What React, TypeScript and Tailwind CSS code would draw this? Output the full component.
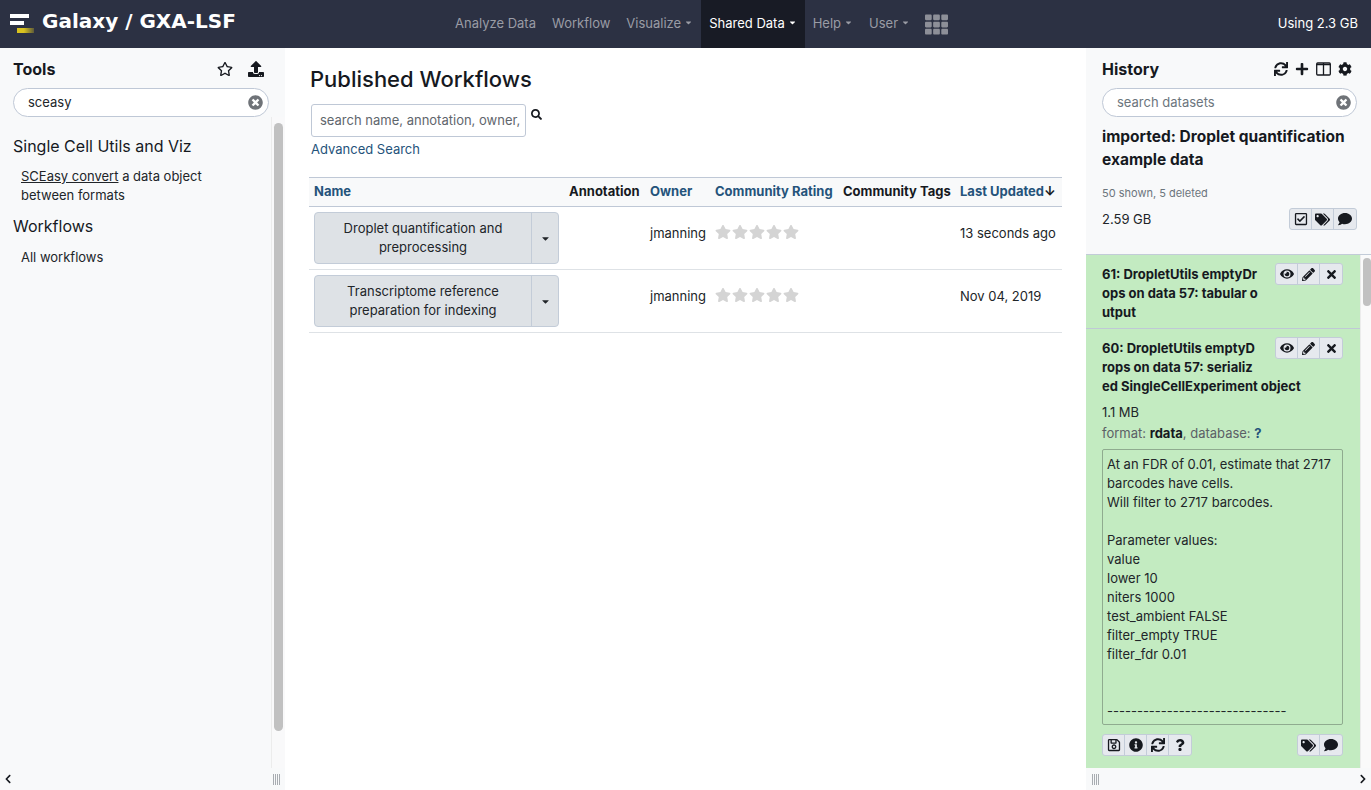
import React from 'react';
import {
  FaRegStar, FaUpload, FaTimesCircle, FaSync, FaPlus, FaCog, FaRegCheckSquare, FaTags, FaComment,
  FaEye, FaPencilAlt, FaTimes, FaRegSave, FaInfoCircle, FaQuestion, FaChevronLeft, FaChevronRight,
  FaSearch, FaStar, FaTh, FaCaretDown,
} from 'react-icons/fa';

const navItems = [
  { label: 'Analyze Data' },
  { label: 'Workflow' },
  { label: 'Visualize', caret: true },
  { label: 'Shared Data', caret: true, active: true },
  { label: 'Help', caret: true },
  { label: 'User', caret: true },
];

const IconGroup: React.FC<{ icons: React.ReactNode[] }> = ({ icons }) => (
  <div className="flex h-[22px] rounded-[3px] border border-[#c3ccd8] bg-[#e6e9ee] divide-x divide-[#c3ccd8] text-[#16191f]">
    {icons.map((icon, i) => (
      <span key={i} className="flex w-[22px] items-center justify-center">
        {icon}
      </span>
    ))}
  </div>
);

const SearchBox: React.FC<{ value: string; muted?: boolean; indent: string }> = ({ value, muted, indent }) => (
  <div className={`relative flex h-[29px] items-center rounded-full border border-[#bfc8d6] bg-white ${indent} ${muted ? 'text-[#6c757d]' : 'text-[#212529]'}`}>
    {value}
    <FaTimesCircle className="absolute right-[5px] top-[6px] text-[15px] text-[#6f7378]" />
  </div>
);

const Grip = () => (
  <div className="flex h-[11px] gap-[1px]">
    <span className="w-[1px] bg-[#a8acb1]" />
    <span className="w-[1px] bg-[#a8acb1]" />
    <span className="w-[1px] bg-[#a8acb1]" />
    <span className="w-[1px] bg-[#a8acb1]" />
  </div>
);

const WorkflowRow: React.FC<{ title: string[]; updated: string; tall?: boolean }> = ({ title, updated }) => (
  <tr className="border-b border-[#dee2e6] align-top">
    <td className="py-[5px] pl-[5px] pr-0">
      <div className="flex h-[52px] w-[245px] rounded-[4px] border border-[#c3ccd8] bg-[#dee2e6] text-[#212529]">
        <div className="flex flex-1 flex-col items-center justify-center leading-[19px]">
          {title.map((line) => (
            <span key={line}>{line}</span>
          ))}
        </div>
        <div className="flex w-[27px] items-center justify-center border-l border-[#c3ccd8]">
          <FaCaretDown className="text-[11px]" />
        </div>
      </div>
    </td>
    <td />
    <td className="pl-[5px] pt-[17px] text-[#212529]">jmanning</td>
    <td className="pl-[5px] pt-[17px]">
      <div className="flex gap-[1px] text-[16px] text-[#d4d4d4]">
        <FaStar />
        <FaStar />
        <FaStar />
        <FaStar />
        <FaStar />
      </div>
    </td>
    <td />
    <td className="pl-[5px] pt-[17px] text-[#212529]">{updated}</td>
  </tr>
);

const App: React.FC = () => {
  return (
    <div className="flex h-[790px] w-[1371px] flex-col overflow-hidden bg-white text-[13px] text-[#212529] font-['Inter','Liberation_Sans',sans-serif]">
      {/* masthead */}
      <header className="flex h-[48px] shrink-0 items-center bg-[#2c3143] text-[#9a9ca5]">
        <div className="ml-[10px] flex w-[20px] flex-col gap-[2px]">
          <svg width="24" height="24" viewBox="0 0 24 24">
            <defs>
              <linearGradient id="logoFade" x1="0" x2="1" y1="0" y2="0">
                <stop offset="0.4" stopColor="#d9c21f" />
                <stop offset="1" stopColor="#5d5a3a" />
              </linearGradient>
            </defs>
            <rect x="0" y="2" width="19" height="4" fill="#fff" />
            <rect x="0" y="9" width="14" height="4" fill="#fff" />
            <rect x="7" y="16" width="17" height="5" fill="url(#logoFade)" />
          </svg>
        </div>
        <div className="ml-[12px] w-[405px] text-[20px] font-bold leading-none text-white font-['DejaVu_Sans',sans-serif] -mt-[6px]">
          Galaxy / GXA-LSF
        </div>
        <nav className="flex h-full items-stretch">
          {navItems.map((item) => (
            <div
              key={item.label}
              className={`flex items-center gap-[3px] px-[8px] ${item.active ? 'bg-[#181b25] text-white' : ''}`}
            >
              {item.label}
              {item.caret && <FaCaretDown className="text-[9px] -mt-[3px]" />}
            </div>
          ))}
          <div className="ml-[7px] flex items-center">
            <FaTh className="text-[23px] text-[#8d8f98]" />
          </div>
        </nav>
        <div className="ml-auto mr-[13px] text-white">Using 2.3 GB</div>
      </header>

      <div className="flex min-h-0 flex-1">
        {/* tools */}
        <aside className="flex w-[285px] shrink-0 flex-col bg-[#f8f9fa]">
          <div className="px-[13px] pt-[11px]">
            <div className="flex h-[19px] items-center justify-between pr-[8px]">
              <h2 className="text-[16px] font-bold text-[#16191f]">Tools</h2>
              <div className="flex items-center gap-[15px] text-[#16191f]">
                <FaRegStar className="text-[16px]" />
                <FaUpload className="text-[16px]" />
              </div>
            </div>
            <div className="mt-[10px] w-[256px]">
              <SearchBox value="sceasy" indent="pl-[14px]" />
            </div>
          </div>
          <div className="flex min-h-0 flex-1">
            <div className="w-[271px] px-[13px] pt-[17px]">
              <h3 className="text-[16px] leading-[24px] text-[#16191f]">Single Cell Utils and Viz</h3>
              <p className="mt-[9px] pl-[8px] leading-[19px]">
                <span className="underline">SCEasy convert</span> a data object
                <br />
                between formats
              </p>
              <h3 className="mt-[9px] text-[16px] leading-[24px] text-[#16191f]">Workflows</h3>
              <p className="mt-[10px] pl-[8px] leading-[19px]">All workflows</p>
            </div>
            <div className="w-[14px] border-l border-[#ececec] bg-[#f9f9fa] pl-[2px] pt-[6px]">
              <div className="h-[608px] w-[9px] rounded-full bg-[#c1c1c1]" />
            </div>
          </div>
          <div className="flex h-[22px] shrink-0 items-center justify-between pl-[3px] pr-[5px]">
            <FaChevronLeft className="text-[10px] text-[#16191f]" />
            <Grip />
          </div>
        </aside>

        {/* center */}
        <main className="min-w-0 flex-1 pl-[24px] pr-[24px] pt-[17px]">
          <h1 className="pl-[1px] text-[22px] font-medium leading-[28px] text-[#16191f]">Published Workflows</h1>
          <div className="mt-[11px] flex items-start pl-[2px]">
            <div className="flex h-[33px] w-[215px] items-center rounded-[3px] border border-[#bfc8d6] bg-white pl-[8px] text-[#5f666d] whitespace-nowrap overflow-hidden">
              search name, annotation, owner,
            </div>
            <FaSearch className="ml-[5px] mt-[5px] text-[11px] text-[#16191f]" />
          </div>
          <div className="mt-[4px] pl-[2px] leading-[16px] text-[#25537b]">Advanced Search</div>
          <table className="mt-[20px] w-[753px] table-fixed border-collapse">
            <colgroup>
              <col className="w-[255px]" />
              <col className="w-[81px]" />
              <col className="w-[65px]" />
              <col className="w-[128px]" />
              <col className="w-[117px]" />
              <col className="w-[107px]" />
            </colgroup>
            <thead>
              <tr className="h-[29px] border-y border-[#bfc8d6] bg-[#f8f9fa] text-left font-bold whitespace-nowrap">
                <th className="pl-[5px] text-[#25537b]">Name</th>
                <th className="pl-[5px] text-[#16191f]">Annotation</th>
                <th className="pl-[5px] text-[#25537b]">Owner</th>
                <th className="pl-[5px] text-[#25537b]">Community Rating</th>
                <th className="pl-[5px] text-[#16191f]">Community Tags</th>
                <th className="pl-[5px] text-[#25537b]">Last Updated<span className="text-[#16191f]">↓</span></th>
              </tr>
            </thead>
            <tbody>
              <WorkflowRow title={['Droplet quantification and', 'preprocessing']} updated="13 seconds ago" />
              <WorkflowRow title={['Transcriptome reference', 'preparation for indexing']} updated="Nov 04, 2019" />
            </tbody>
          </table>
        </main>

        {/* history */}
        <aside className="flex w-[285px] shrink-0 flex-col bg-[#f8f9fa]">
          <div className="h-[207px] shrink-0 border-b border-[#c3ccd8] pl-[16px] pr-[14px] pt-[11px]">
            <div className="flex h-[19px] items-center justify-between pr-[5px]">
              <h2 className="text-[16px] font-bold text-[#16191f]">History</h2>
              <div className="flex items-center gap-[7px] text-[14px] text-[#16191f]">
                <FaSync />
                <FaPlus />
                <svg width="15" height="14" viewBox="0 0 15 14" fill="none" stroke="currentColor" strokeWidth="1.3">
                  <rect x="0.7" y="1" width="13.6" height="12" rx="1" />
                  <path d="M7.5 1v12M0.7 2.6h13.6" />
                </svg>
                <FaCog />
              </div>
            </div>
            <div className="mt-[10px]">
              <SearchBox value="search datasets" muted indent="pl-[14px]" />
            </div>
            <div className="mt-[8px] text-[15.5px] font-bold leading-[23px] text-[#16191f]">
              imported: Droplet quantification
              <br />
              example data
            </div>
            <div className="mt-[14px] text-[11px] leading-[16px] text-[#6c757d]">50 shown, 5 deleted</div>
            <div className="mt-[7px] flex items-start justify-between">
              <span className="pt-[3px] leading-[16px]">2.59 GB</span>
              <IconGroup icons={[<FaRegCheckSquare className="text-[14px]" />, <FaTags className="text-[15px]" />, <FaComment className="text-[14px]" />]} />
            </div>
          </div>
          <div className="flex min-h-0 flex-1">
            <div className="w-[274px] bg-[#c3ebc1] text-[#212529]">
              <div className="relative h-[74px] border-b border-[#bfc8d6] pl-[16px] pt-[10px] font-bold leading-[19px] text-[#16191f]">
                61: DropletUtils emptyDr
                <br />
                ops on data 57: tabular o
                <br />
                utput
                <div className="absolute right-[17px] top-[8px]">
                  <IconGroup icons={[<FaEye className="text-[14px]" />, <FaPencilAlt className="text-[13px]" />, <FaTimes className="text-[13px]" />]} />
                </div>
              </div>
              <div className="relative pl-[16px] pr-[17px] pt-[10px]">
                <div className="font-bold leading-[19px] text-[#16191f]">
                  60: DropletUtils emptyD
                  <br />
                  rops on data 57: serializ
                  <br />
                  ed SingleCellExperiment object
                </div>
                <div className="absolute right-[17px] top-[8px]">
                  <IconGroup icons={[<FaEye className="text-[14px]" />, <FaPencilAlt className="text-[13px]" />, <FaTimes className="text-[13px]" />]} />
                </div>
                <div className="mt-[8px] leading-[16px]">1.1 MB</div>
                <div className="mt-[5px] leading-[16px] text-[#5b6066]">
                  format: <b className="text-[#16191f]">rdata</b>, database: <b className="text-[#25537b]">?</b>
                </div>
                <div className="mt-[8px] h-[276px] rounded-[2px] border border-[#8fab8f] pl-[4px] pt-[5px] leading-[19px] text-[#212529]">
                  At an FDR of 0.01, estimate that 2717
                  <br />
                  barcodes have cells.
                  <br />
                  Will filter to 2717 barcodes.
                  <br />
                  <br />
                  Parameter values:
                  <br />
                  value
                  <br />
                  lower 10
                  <br />
                  niters 1000
                  <br />
                  test_ambient FALSE
                  <br />
                  filter_empty TRUE
                  <br />
                  filter_fdr 0.01
                  <br />
                  <br />
                  <br />
                  ------------------------------
                </div>
                <div className="mt-[9px] flex justify-between">
                  <IconGroup icons={[<FaRegSave className="text-[14px]" />, <FaInfoCircle className="text-[14px]" />, <FaSync className="text-[14px]" />, <FaQuestion className="text-[12px]" />]} />
                  <IconGroup icons={[<FaTags className="text-[15px]" />, <FaComment className="text-[14px]" />]} />
                </div>
              </div>
            </div>
            <div className="flex-1 border-l border-[#ececec] bg-[#fafafa] pl-[2px] pt-[3px]">
              <div className="h-[48px] w-[8px] rounded-full bg-[#c1c1c1]" />
            </div>
          </div>
          <div className="flex h-[22px] shrink-0 items-center justify-between pl-[6px] pr-[3px]">
            <Grip />
            <FaChevronRight className="text-[10px] text-[#16191f]" />
          </div>
        </aside>
      </div>
    </div>
  );
};

export default App;
